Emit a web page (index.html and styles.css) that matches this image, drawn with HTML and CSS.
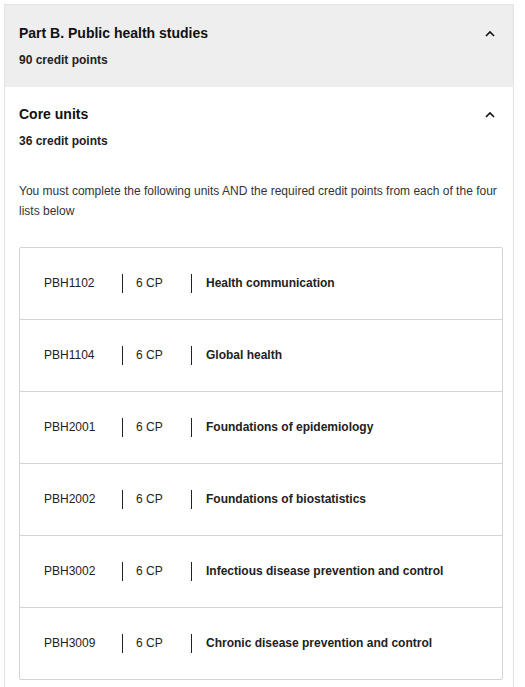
FILE: index.html
```html
<!DOCTYPE html>
<html>
<head>
<meta charset="utf-8">
<link rel="stylesheet" href="styles.css">
</head>
<body>
<div class="panel">
  <div class="part-head">
    <div class="head-row">
      <div class="part-title">Part B. Public health studies</div>
      <svg class="chev" width="10" height="7" viewBox="0 0 10 7"><path d="M1 6 L5 2 L9 6" fill="none" stroke="#111" stroke-width="1.6"/></svg>
    </div>
    <div class="credits">90 credit points</div>
  </div>
  <div class="section">
    <div class="head-row">
      <div class="sec-title">Core units</div>
      <svg class="chev" width="10" height="7" viewBox="0 0 10 7"><path d="M1 6 L5 2 L9 6" fill="none" stroke="#111" stroke-width="1.6"/></svg>
    </div>
    <div class="credits">36 credit points</div>
    <p class="intro">You must complete the following units AND the required credit points from each of the four lists below</p>
    <div class="units">
      <div class="unit"><span class="code">PBH1102</span><span class="div"></span><span class="cp">6 CP</span><span class="div"></span><span class="name">Health communication</span></div>
      <div class="unit"><span class="code">PBH1104</span><span class="div"></span><span class="cp">6 CP</span><span class="div"></span><span class="name">Global health</span></div>
      <div class="unit"><span class="code">PBH2001</span><span class="div"></span><span class="cp">6 CP</span><span class="div"></span><span class="name">Foundations of epidemiology</span></div>
      <div class="unit"><span class="code">PBH2002</span><span class="div"></span><span class="cp">6 CP</span><span class="div"></span><span class="name">Foundations of biostatistics</span></div>
      <div class="unit"><span class="code">PBH3002</span><span class="div"></span><span class="cp">6 CP</span><span class="div"></span><span class="name">Infectious disease prevention and control</span></div>
      <div class="unit"><span class="code">PBH3009</span><span class="div"></span><span class="cp">6 CP</span><span class="div"></span><span class="name">Chronic disease prevention and control</span></div>
    </div>
  </div>
</div>
</body>
</html>
```
FILE: styles.css
```css
html, body {
  margin: 0;
  padding: 0;
  background: #fff;
}
body {
  font-family: "Liberation Sans", Arial, sans-serif;
  color: #111;
  padding: 4px 0 0 4px;
}
.panel {
  width: 510px;
  border: 1px solid #e2e2e2;
  border-bottom: none;
  height: 700px;
  box-sizing: border-box;
}
.part-head {
  background: #eeeeee;
  padding: 18px 18px 19px 14px;
}
.head-row {
  display: flex;
  justify-content: space-between;
  align-items: center;
}
.part-title, .sec-title {
  font-size: 14px;
  font-weight: bold;
  line-height: 20px;
}
.chev {
  display: block;
}
.credits {
  font-size: 12px;
  font-weight: bold;
  line-height: 16px;
  margin-top: 9px;
  color: #222;
}
.section {
  padding: 17px 10px 0 14px;
}
.section .head-row {
  padding-right: 8px;
}
.intro {
  margin: 32px 0 0 0;
  font-size: 12px;
  line-height: 20px;
  color: #333;
}
.units {
  margin-top: 26px;
  border: 1px solid #d4d4d4;
  border-radius: 2px;
}
.unit {
  display: flex;
  align-items: center;
  height: 71px;
  padding-left: 24px;
  padding-bottom: 1px;
  box-sizing: border-box;
  font-size: 12px;
  color: #222;
}
.unit + .unit {
  height: 72px;
  border-top: 1px solid #d4d4d4;
}
.code {
  width: 78px;
}
.div {
  width: 1px;
  height: 19px;
  background: #222;
}
.cp {
  width: 55px;
  padding-left: 13px;
}
.name {
  padding-left: 14px;
  font-weight: bold;
}
```
